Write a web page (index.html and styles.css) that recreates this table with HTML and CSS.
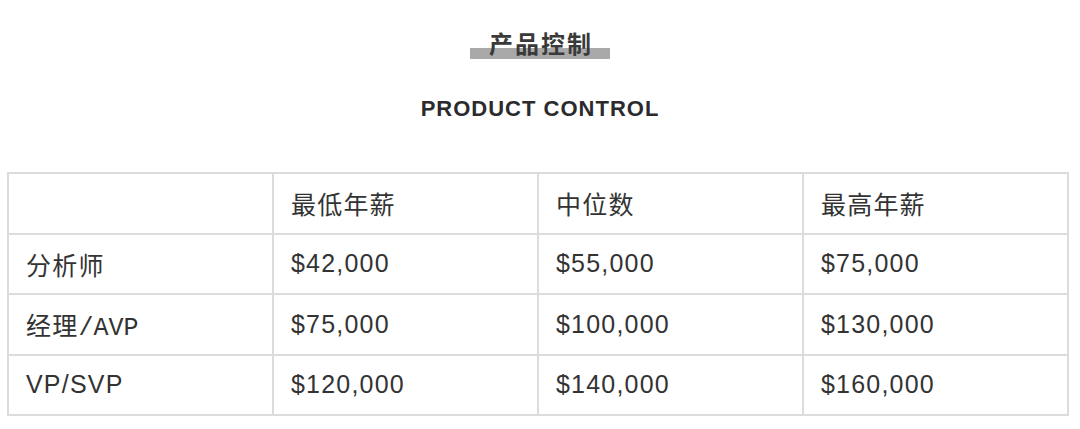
FILE: index.html
```html
<!DOCTYPE html>
<html lang="zh">
<head>
<meta charset="utf-8">
<link rel="stylesheet" href="styles.css">
</head>
<body>
<div class="page">
  <header class="head">
    <h1 class="title"><span class="mark">产品控制</span></h1>
    <h2 class="subtitle">PRODUCT CONTROL</h2>
  </header>
  <table class="salary">
    <tr><td></td><td>最低年薪</td><td>中位数</td><td>最高年薪</td></tr>
    <tr><td>分析师</td><td>$42,000</td><td>$55,000</td><td>$75,000</td></tr>
    <tr><td>经理<span class="mono">/AVP</span></td><td>$75,000</td><td>$100,000</td><td>$130,000</td></tr>
    <tr><td>VP/SVP</td><td>$120,000</td><td>$140,000</td><td>$160,000</td></tr>
  </table>
</div>
</body>
</html>
```

FILE: styles.css
```css
html, body {
  margin: 0;
  padding: 0;
  background: #ffffff;
}
.page {
  width: 1080px;
  height: 429px;
  font-family: "Liberation Sans", "Noto Sans CJK SC", sans-serif;
  color: #333333;
  padding-top: 28px;
  box-sizing: border-box;
}
.head {
  display: flex;
  flex-direction: column;
  align-items: center;
}
.title {
  margin: 0;
  font-size: 24px;
  font-weight: 600;
  line-height: 34px;
  letter-spacing: 2px;
  color: #3a3a3a;
}
.mark {
  display: inline-block;
  padding: 0 17px 0 19px;
  background: linear-gradient(to bottom, transparent 0, transparent 20px, #a9a9a9 20px, #a9a9a9 31px, transparent 31px);
}
.subtitle {
  margin: 33px 0 0 0;
  font-size: 22px;
  font-weight: 700;
  letter-spacing: 1px;
  line-height: 28px;
  color: #2b2b2d;
  padding-left: 0;
}
.salary {
  margin: 49px 0 0 7px;
  width: 1062px;
  border-collapse: collapse;
  table-layout: fixed;
}
.salary td {
  border: 2px solid #dcdcdc;
  height: 58.5px;
  padding: 0 0 0 17px;
  font-size: 25px;
  letter-spacing: 1.2px;
  color: #333333;
  vertical-align: middle;
}
.mono {
  font-family: "Liberation Mono", "Courier New", monospace;
  font-weight: 400;
  font-size: 25px;
  letter-spacing: 0;
}
```
